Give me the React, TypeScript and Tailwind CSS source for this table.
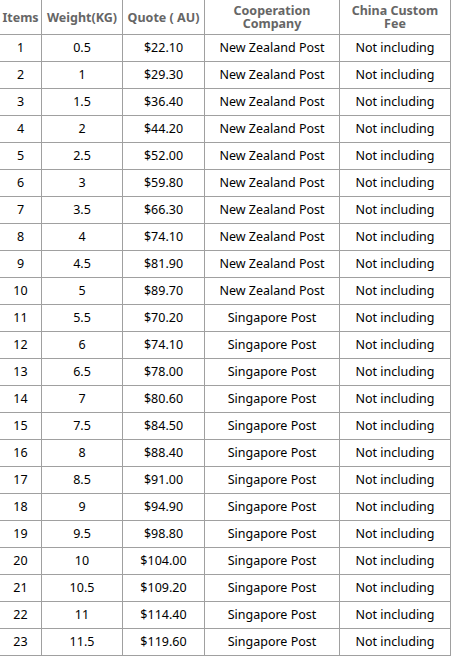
import React from "react";

const rows: [string, string, string, string][] = [
  ["1", "0.5", "$22.10", "New Zealand Post"],
  ["2", "1", "$29.30", "New Zealand Post"],
  ["3", "1.5", "$36.40", "New Zealand Post"],
  ["4", "2", "$44.20", "New Zealand Post"],
  ["5", "2.5", "$52.00", "New Zealand Post"],
  ["6", "3", "$59.80", "New Zealand Post"],
  ["7", "3.5", "$66.30", "New Zealand Post"],
  ["8", "4", "$74.10", "New Zealand Post"],
  ["9", "4.5", "$81.90", "New Zealand Post"],
  ["10", "5", "$89.70", "New Zealand Post"],
  ["11", "5.5", "$70.20", "Singapore Post"],
  ["12", "6", "$74.10", "Singapore Post"],
  ["13", "6.5", "$78.00", "Singapore Post"],
  ["14", "7", "$80.60", "Singapore Post"],
  ["15", "7.5", "$84.50", "Singapore Post"],
  ["16", "8", "$88.40", "Singapore Post"],
  ["17", "8.5", "$91.00", "Singapore Post"],
  ["18", "9", "$94.90", "Singapore Post"],
  ["19", "9.5", "$98.80", "Singapore Post"],
  ["20", "10", "$104.00", "Singapore Post"],
  ["21", "10.5", "$109.20", "Singapore Post"],
  ["22", "11", "$114.40", "Singapore Post"],
  ["23", "11.5", "$119.60", "Singapore Post"],
];

const cell = "flex items-center justify-center border-r border-b border-[#a0a0a0] text-center";
const head = `${cell} font-bold text-[#666] text-[12.5px] leading-[13px]`;

export default function App() {
  return (
    <div
      className="w-[451px] h-[656px] bg-white overflow-hidden"
      style={{ fontFamily: '"Noto Sans", "Open Sans", sans-serif' }}
    >
      <div className="grid grid-cols-[42px_81px_82px_135px_111px] grid-rows-[35px_repeat(23,27px)] text-[12.5px] text-black">
        <div className={head}>Items</div>
        <div className={head}>Weight(KG)</div>
        <div className={head}>Quote ( AU)</div>
        <div className={head}>
          Cooperation<br />Company
        </div>
        <div className={head}>
          China Custom<br />Fee
        </div>
        {rows.map((r) => (
          <React.Fragment key={r[0]}>
            <div className={cell}>{r[0]}</div>
            <div className={cell}>{r[1]}</div>
            <div className={cell}>{r[2]}</div>
            <div className={cell}>{r[3]}</div>
            <div className={cell}>Not including</div>
          </React.Fragment>
        ))}
      </div>
    </div>
  );
}
